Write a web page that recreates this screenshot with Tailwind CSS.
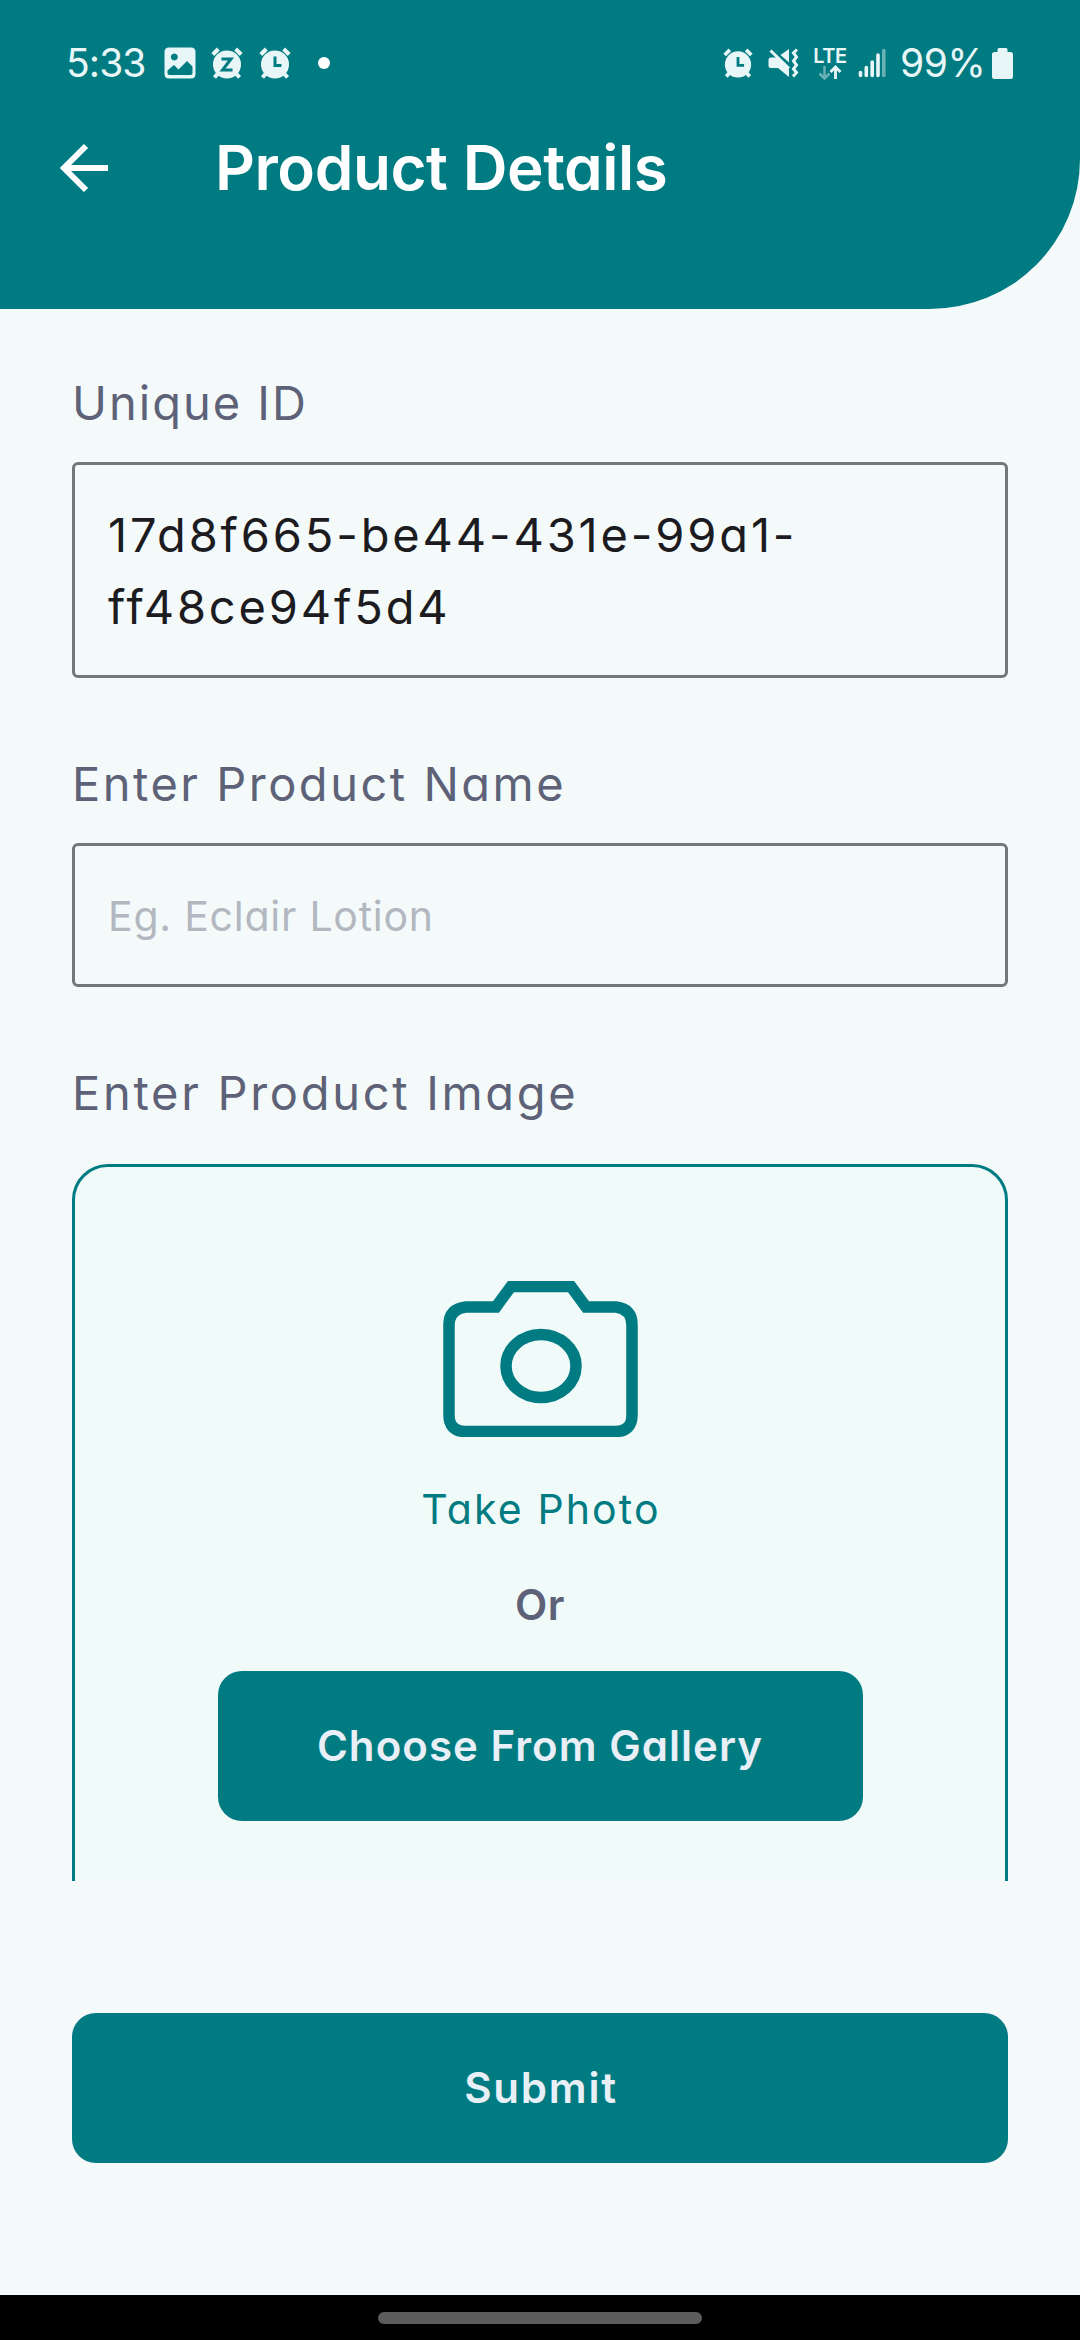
<!DOCTYPE html>
<html lang="en"><head><meta charset="utf-8"><title>Product Details</title>
<script src="https://cdn.jsdelivr.net/npm/@tailwindcss/browser@4"></script></head>
<body class="w-[1080px] h-[2340px] overflow-hidden bg-[#f4fafa] font-['Inter',sans-serif] [font-feature-settings:'cv11']">
<div class="flex h-full flex-col">
<header class="flex h-[309px] shrink-0 flex-col rounded-br-[150px] bg-[#007b82] text-white">
  <div class="flex h-[126px] items-center justify-between pl-[66px] pr-[67px] text-[#e9f6f8]">
    <div class="flex items-center">
      <span class="w-[98px] whitespace-nowrap text-[39px] leading-[48px] tracking-[-0.9px]">5:33</span>
      <svg class="h-8 w-8" viewBox="0 0 32 32"><path fill="currentColor" fill-rule="evenodd" d="M5 .5H27Q31.5.5 31.5 5V27Q31.5 31.5 27 31.5H5Q.5 31.5.5 27V5Q.5.5 5 .5ZM10.300 6.500a3.500 3.500 0 1 0 .01 0ZM3.500 23.500V26Q3.500 28 5.500 28H26.500Q28.500 28 28.500 26V19.500L23 14L14.500 22.500L10 18Z"/></svg>
      <svg class="ml-[15px] h-8 w-8" viewBox="0 0 32 32"><circle cx="16" cy="17.500" r="14" fill="currentColor"/><path d="M1.800 7.500L7.300 2M30.200 7.500L24.700 2M6.500 27L3.500 30.500M25.500 27L28.500 30.500" stroke="currentColor" stroke-width="4"/><path d="M10.500 12H20L11.500 23H21.500" fill="none" stroke="#007b82" stroke-width="3"/></svg>
      <svg class="ml-[16px] h-8 w-8" viewBox="0 0 32 32"><circle cx="16" cy="17.500" r="14" fill="currentColor"/><path d="M1.800 7.500L7.300 2M30.200 7.500L24.700 2M6.500 27L3.500 30.500M25.500 27L28.500 30.500" stroke="currentColor" stroke-width="4"/><path d="M16 9.500V18.500H22.500" fill="none" stroke="#007b82" stroke-width="3"/></svg>
      <span class="ml-[27px] h-3 w-3 rounded-full bg-white"></span>
    </div>
    <div class="flex items-center">
      <svg class="h-[30px] w-[30px]" viewBox="0 0 32 32"><circle cx="16" cy="17.500" r="14" fill="currentColor"/><path d="M1.800 7.500L7.300 2M30.200 7.500L24.700 2M6.500 27L3.500 30.500M25.500 27L28.500 30.500" stroke="currentColor" stroke-width="4"/><path d="M16 9.500V18.500H22.500" fill="none" stroke="#007b82" stroke-width="3"/></svg>
      <svg class="ml-[15px] h-[30px] w-[31px]" viewBox="0 0 31 30"><path fill="currentColor" d="M3 9.500H8.500L21 21.500V29L10 20H3Q.5 20 .5 17.500V12Q.5 9.500 3 9.500ZM12.500 7L21 1V14.500Z"/><path d="M2.500 2.500L21 20.500" stroke="currentColor" stroke-width="3"/><path d="M29 1.500L25.500 5L28.500 9L25.500 13L28.500 17L25.500 21L28.500 24.500L25 28.500" fill="none" stroke="currentColor" stroke-width="3"/></svg>
      <span class="ml-[14px] flex w-[34px] flex-col items-center">
        <span class="text-[20px] font-semibold leading-[18px] tracking-[-0.4px]">LTE</span>
        <svg class="h-[15px] w-[24px]" viewBox="0 0 24 15"><path d="M6.500 1V13M1.500 8.500L6.500 13.500L11.500 8.500" fill="none" stroke="#6bb0b5" stroke-width="2.500"/><path d="M17.500 14V2M12.500 7L17.500 2L22.500 7" fill="none" stroke="currentColor" stroke-width="2.800"/></svg>
      </span>
      <svg class="ml-[11px] h-[30px] w-[28px]" viewBox="0 0 28 30"><path d="M2.500 27.500V24.500M8.300 27.500V19.500M14.200 27.500V14M20 27.500V7" stroke="currentColor" stroke-width="3.600" stroke-linecap="round"/><path d="M25.800 27.500V2.500" stroke="#6bb0b5" stroke-width="3.600" stroke-linecap="round"/></svg>
      <span class="ml-[14px] w-[92px] whitespace-nowrap text-[39px] leading-[48px] tracking-[-0.4px]">99%</span>
      <svg class="h-[31px] w-[21px]" viewBox="0 0 21 31"><path fill="currentColor" d="M7 0H14Q15.500 0 15.500 1.500V4H18.500Q21 4 21 6.500V28.500Q21 31 18.500 31H2.500Q0 31 0 28.500V6.500Q0 4 2.500 4H5.500V1.500Q5.500 0 7 0Z"/></svg>
    </div>
  </div>
  <div class="flex h-[84px] items-center pl-[60px]">
    <svg class="h-[50px] w-[50px]" viewBox="0 0 50 50"><path d="M48 25H5M26 3L4 25L26 47" fill="none" stroke="currentColor" stroke-width="6"/></svg>
    <h1 class="ml-[105px] whitespace-nowrap text-[62px] font-semibold leading-[84px] tracking-[-0.45px]">Product Details</h1>
  </div>
</header>
<main class="h-[1572px] shrink-0 overflow-hidden px-[72px] pt-[58px] text-[47px] leading-[72px] text-[#5e6278]">
  <label class="block tracking-[2px]">Unique ID</label>
  <div class="mt-[23px] h-[216px] rounded-[6px] border-3 border-[#6f7979] px-[33px] pt-[34px] text-[#1c1b1f] tracking-[2.85px]">17d8f665-be44-431e-99a1-<br>ff48ce94f5d4</div>
  <label class="mt-[70px] block tracking-[2.5px]">Enter Product Name</label>
  <div class="mt-[23px] h-[144px] rounded-[6px] border-3 border-[#6f7979] px-[33px] pt-[34px] text-[41px] text-[#b3b7c0] tracking-[0.75px]">Eg. Eclair Lotion</div>
  <label class="mt-[70px] block tracking-[2.7px]">Enter Product Image</label>
  <section class="mt-[35px] flex h-[780px] flex-col items-center rounded-[36px] border-3 border-[#007b82] bg-[#effaf9] pt-[114px] text-[42px] leading-[60px]">
    <svg class="h-[156px] w-[195px]" viewBox="0 0 195 156" fill="none" stroke="#007b82"><path stroke-width="11.500" d="M23 26H53L68 5.500H128L143 26H173Q189 28 189 44V134Q189 150 173 150.500H22Q6 150 6 134V44Q6 28 23 26Z"/><ellipse cx="98" cy="85" rx="35" ry="31.500" stroke-width="11.500"/></svg>
    <p class="mt-[42px] pl-[2px] text-[41px] text-[#007b82] tracking-[2.15px]">Take Photo</p>
    <p class="mt-[36px] font-semibold tracking-[0.5px]">Or</p>
    <button class="mt-[36px] h-[150px] w-[645px] rounded-[24px] bg-[#007b82] font-semibold text-[#e8eff6] tracking-[1.05px]">Choose From Gallery</button>
  </section>
</main>
<button class="mx-[72px] mt-[132px] h-[150px] shrink-0 rounded-[24px] bg-[#007b82] pb-[2px] pl-[2px] text-[42px] font-semibold text-[#e8eff6] tracking-[1.8px]">Submit</button>
<footer class="mt-auto flex h-[45px] shrink-0 justify-center bg-black pt-[17px]"><div class="h-3 w-[324px] rounded-full bg-[#5c5c5c]"></div></footer>
</div>
</body></html>
